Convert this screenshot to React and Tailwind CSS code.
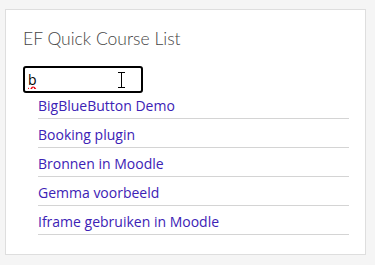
import { useState } from 'react';

const courses = [
  'BigBlueButton Demo',
  'Booking plugin',
  'Bronnen in Moodle',
  'Gemma voorbeeld',
  'Iframe gebruiken in Moodle',
];

const App = () => {
  const [query, setQuery] = useState('b');

  return (
    <div className="w-[375px] h-[265px] bg-[#f5f5f5] pt-[9px] pl-[5px] font-['Open_Sans',sans-serif]">
      <div className="w-[361px] h-[246px] bg-white border border-[#dedede] pl-[17px] pt-[17px]">
        {/* Title */}
        <h2 className="text-[17.5px] font-light font-['Lato',sans-serif] text-[#454545] leading-[24px]">
          EF Quick Course List
        </h2>

        {/* Search box */}
        <div className="relative mt-[15px] w-[120px] h-[27px]">
          <input
            value={query}
            onChange={(e) => setQuery(e.target.value)}
            className="w-full h-full border-2 border-black rounded-[3px] pl-[3px] text-[14px] text-black outline-none underline decoration-wavy decoration-red-600"
          />
          <span className="absolute left-[95px] top-[6px] w-[7px] h-[16px] pointer-events-none">
            <span className="absolute left-[3px] top-0 w-px h-[16px] bg-black" />
            <span className="absolute left-0 top-0 w-[7px] h-px bg-black" />
            <span className="absolute left-0 bottom-0 w-[7px] h-px bg-black" />
          </span>
        </div>

        {/* Course list */}
        <ul className="ml-[15px] mr-[16px] mt-[-3px]">
          {courses.map((c) => (
            <li key={c} className="border-b border-[#d4d4d4] h-[29px] pt-[3px]">
              <a href="#" className="text-[14px] text-[#3c22b5] leading-[20px]">
                {c}
              </a>
            </li>
          ))}
        </ul>
      </div>
    </div>
  );
};

export default App;
